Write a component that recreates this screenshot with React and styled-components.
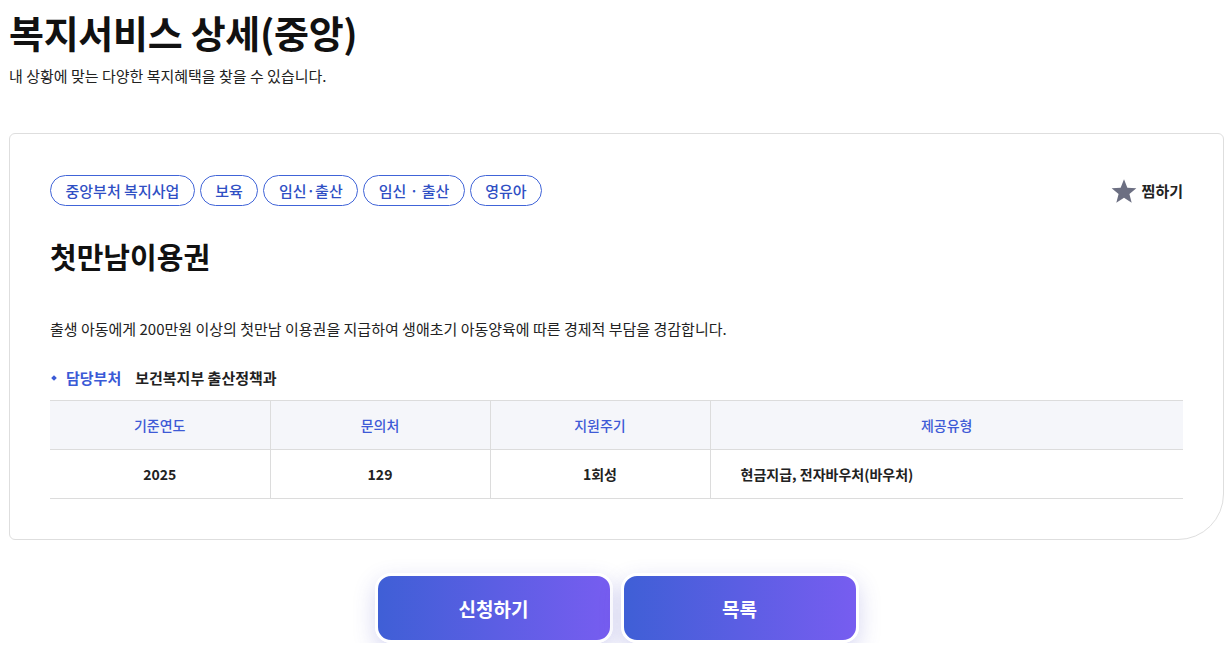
import React from 'react';
import styled, { createGlobalStyle } from 'styled-components';

const GlobalStyle = createGlobalStyle`
  body {
    margin: 0;
    background: #fff;
    font-family: "Noto Sans CJK KR", "Noto Sans", sans-serif;
    color: #111;
  }
`;

const Page = styled.div`
  padding: 0 2px 0 9px;
`;

const Header = styled.header`
  padding-top: 6px;
`;

const Title = styled.h1`
  margin: 0;
  font-size: 38px;
  font-weight: 700;
  line-height: 52px;
  letter-spacing: -0.3px;
  color: #111;
`;

const Subtitle = styled.p`
  margin: 8px 0 0;
  font-size: 15px;
  line-height: 20px;
  color: #222;
`;

const Card = styled.section`
  margin-top: 47px;
  border: 1px solid #dedede;
  border-radius: 6px 6px 46px 6px;
  padding: 41px 40px 40px 40px;
`;

const TopRow = styled.div`
  display: flex;
  align-items: center;
  justify-content: space-between;
`;

const Tags = styled.div`
  display: flex;
  gap: 5px;
`;

const Tag = styled.span`
  display: inline-flex;
  align-items: center;
  height: 31px;
  box-sizing: border-box;
  padding: 0 14.5px;
  border: 1px solid #4064d8;
  border-radius: 16px;
  font-size: 15px;
  font-weight: 500;
  color: #2f4fc4;
`;

const Fav = styled.button`
  display: flex;
  align-items: center;
  gap: 5px;
  background: none;
  border: 0;
  padding: 0;
  font-family: inherit;
  font-size: 15px;
  font-weight: 700;
  color: #222;
  cursor: pointer;
`;

const ServiceName = styled.h2`
  margin: 30px 0 0;
  font-size: 29px;
  font-weight: 700;
  line-height: 40px;
  color: #111;
`;

const Desc = styled.p`
  margin: 42px 0 0;
  font-size: 15px;
  line-height: 22px;
  color: #222;
`;

const Dept = styled.div`
  display: flex;
  align-items: center;
  margin-top: 28px;
  font-size: 15px;
  font-weight: 700;
  line-height: 20px;
`;

const Bullet = styled.span`
  width: 4px;
  height: 4px;
  background: #3a5ad6;
  transform: rotate(45deg);
  margin: 0 10px 0 2px;
`;

const DeptLabel = styled.span`
  color: #3a5ad6;
  margin-right: 14px;
`;

const DeptValue = styled.span`
  color: #222;
`;

const Table = styled.table`
  width: 100%;
  margin-top: 12px;
  border-collapse: collapse;
  table-layout: fixed;
`;

const Th = styled.th`
  height: 48px;
  padding: 0;
  background: #f5f6fa;
  border-top: 1px solid #dcdcdc;
  border-bottom: 1px solid #dcdcdc;
  border-left: 1px solid #dcdcdc;
  font-size: 14px;
  font-weight: 500;
  color: #3e5ad6;
  text-align: center;
  &:first-child { border-left: 0; }
`;

const Td = styled.td`
  height: 48px;
  padding: ${p => (p.$left ? '0 30px' : '0')};
  border-bottom: 1px solid #dcdcdc;
  border-left: 1px solid #dcdcdc;
  font-size: 14px;
  font-weight: 700;
  color: #222;
  text-align: ${p => (p.$left ? 'left' : 'center')};
  &:first-child { border-left: 0; }
`;

const Actions = styled.div`
  display: flex;
  justify-content: center;
  gap: 8px;
  margin-top: 33px;
`;

const ActionButton = styled.button`
  width: 238px;
  height: 70px;
  border: 3px solid #fff;
  border-radius: 16px;
  background: linear-gradient(90deg, #3f5fd6 0%, #775df0 100%);
  box-shadow: 0 8px 22px rgba(70, 70, 190, 0.22);
  color: #fff;
  font-family: inherit;
  font-size: 19px;
  font-weight: 700;
  cursor: pointer;
`;

const StarIcon = () => (
  <svg width="26" height="26" viewBox="0 0 24 24">
    <path
      d="M12 1.2l3.1 7.7 8.3.5-6.4 5.3 2.1 8.1L12 18.3l-7.1 4.5 2.1-8.1L.6 9.4l8.3-.5z"
      fill="#6c6f82"
    />
  </svg>
);

const tags = ['중앙부처 복지사업', '보육', '임신·출산', '임신 · 출산', '영유아'];

export default function App() {
  return (
    <Page>
      <GlobalStyle />
      <Header>
        <Title>복지서비스 상세(중앙)</Title>
        <Subtitle>내 상황에 맞는 다양한 복지혜택을 찾을 수 있습니다.</Subtitle>
      </Header>
      <Card>
        <TopRow>
          <Tags>
            {tags.map(t => (
              <Tag key={t}>{t}</Tag>
            ))}
          </Tags>
          <Fav>
            <StarIcon />
            찜하기
          </Fav>
        </TopRow>
        <ServiceName>첫만남이용권</ServiceName>
        <Desc>
          출생 아동에게 200만원 이상의 첫만남 이용권을 지급하여 생애초기 아동양육에 따른 경제적 부담을 경감합니다.
        </Desc>
        <Dept>
          <Bullet />
          <DeptLabel>담당부처</DeptLabel>
          <DeptValue>보건복지부 출산정책과</DeptValue>
        </Dept>
        <Table>
          <colgroup>
            <col style={{ width: 220 }} />
            <col style={{ width: 220 }} />
            <col style={{ width: 220 }} />
            <col />
          </colgroup>
          <thead>
            <tr>
              <Th>기준연도</Th>
              <Th>문의처</Th>
              <Th>지원주기</Th>
              <Th>제공유형</Th>
            </tr>
          </thead>
          <tbody>
            <tr>
              <Td>2025</Td>
              <Td>129</Td>
              <Td>1회성</Td>
              <Td $left>현금지급, 전자바우처(바우처)</Td>
            </tr>
          </tbody>
        </Table>
      </Card>
      <Actions>
        <ActionButton>신청하기</ActionButton>
        <ActionButton>목록</ActionButton>
      </Actions>
    </Page>
  );
}
